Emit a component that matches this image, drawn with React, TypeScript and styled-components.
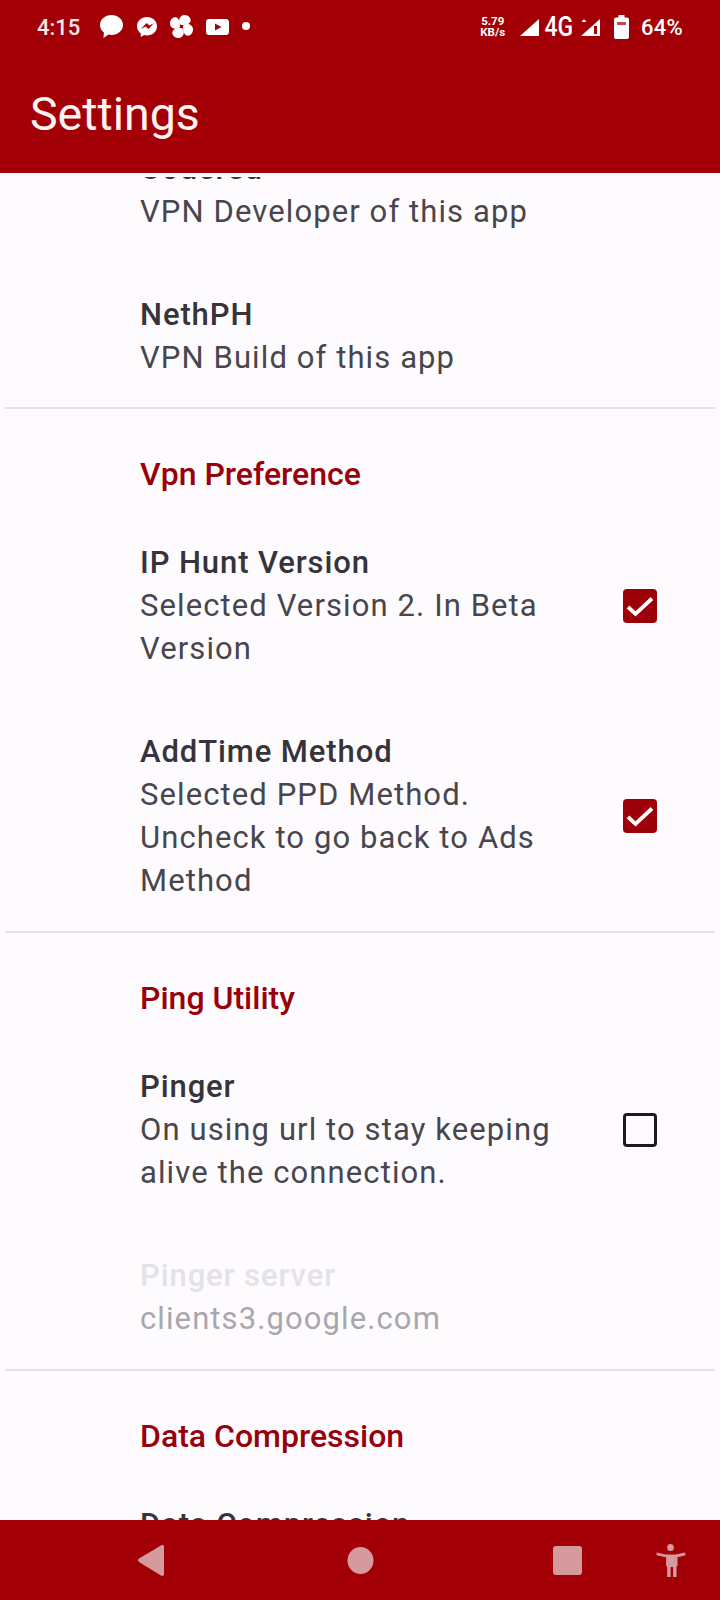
import React from "react";
import styled, { createGlobalStyle } from "styled-components";

const Global = createGlobalStyle`
  html, body { margin: 0; padding: 0; background: #fefbff; }
  * { box-sizing: border-box; }
`;

const Screen = styled.div`
  width: 720px;
  height: 1600px;
  display: flex;
  flex-direction: column;
  overflow: hidden;
  background: #fefbff;
  font-family: Roboto, "Noto Sans", sans-serif;
`;

// ─── Status bar + app bar ─────────────────────────────────────────────────────

const Header = styled.header`
  height: 173px;
  margin-bottom: 4px;
  flex-shrink: 0;
  background: #a20006;
  color: #fff;
  position: relative;
  z-index: 1;
`;

const StatusBar = styled.div`
  height: 54px;
  padding: 0 37px;
  display: flex;
  align-items: center;
  justify-content: space-between;
`;

const StatusGroup = styled.div`
  display: flex;
  align-items: center;
`;

const Clock = styled.span`
  font-size: 22px;
  font-weight: 500;
  margin-right: 20px;
  color: #fbeaea;
`;

const Speed = styled.span`
  font-size: 11.500px;
  line-height: 11px;
  font-weight: 700;
  text-align: center;
  margin-right: 15px;
`;

const NetLabel = styled.span`
  font-size: 27px;
  font-weight: 500;
  margin: 0 5px 0 3px;
  transform: scaleX(0.85);
`;

const Battery = styled.span`
  font-size: 22px;
  font-weight: 500;
  letter-spacing: 0.3px;
  margin-left: 12px;
`;

const Title = styled.h1`
  margin: 0;
  padding: 30px 0 0 30px;
  font-size: 46.500px;
  line-height: 60px;
  font-weight: 400;
  color: #fff3f1;
`;

// ─── Preference list ──────────────────────────────────────────────────────────

const List = styled.main`
  flex: 1;
  min-height: 0;
  overflow: hidden;
`;

const ListInner = styled.div`
  margin-top: -73px;
`;

const Section = styled.section<{ $bottom: number }>`
  margin: 0 5px;
  padding: 43px 0 ${({ $bottom }) => $bottom}px;
  border-bottom: 2px solid #e4e1e6;
  &:last-child { border-bottom: 0; }
`;

const SectionTitle = styled.h2`
  margin: 0 0 45px;
  padding-left: 135px;
  font-size: 32px;
  line-height: 44px;
  font-weight: 500;
  color: #98000a;
`;

const Row = styled.div`
  display: flex;
  align-items: center;
  padding-left: 135px;
  padding-right: 58px;
  & + & { margin-top: 60px; }
`;

const RowText = styled.div`
  flex: 1;
  min-width: 0;
  padding-right: 50px;
`;

const RowTitle = styled.div<{ $disabled?: boolean }>`
  font-size: 31px;
  line-height: 43px;
  font-weight: 500;
  letter-spacing: 0.9px;
  color: ${({ $disabled }) => ($disabled ? "#e4e2e6" : "#36343a")};
`;

const RowSummary = styled.div<{ $disabled?: boolean }>`
  font-size: 31px;
  line-height: 43px;
  letter-spacing: 1.100px;
  color: ${({ $disabled }) => ($disabled ? "#a9a6ad" : "#48464c")};
`;

const CheckBox = styled.span<{ $checked: boolean }>`
  width: 34px;
  height: 34px;
  flex-shrink: 0;
  border-radius: 4px;
  display: flex;
  align-items: center;
  justify-content: center;
  background: ${({ $checked }) => ($checked ? "#9c0009" : "transparent")};
  border: ${({ $checked }) => ($checked ? "none" : "3.500px solid #1e1b20")};
`;

// ─── Navigation bar ───────────────────────────────────────────────────────────

const NavBar = styled.nav`
  height: 80px;
  flex-shrink: 0;
  background: #a20006;
  position: relative;
  z-index: 1;
`;

const NavIcons = styled.svg`
  display: block;
`;

const PETAL = "M-.5-1.500C-4-4-2.500-11.500 3-11.500C8-11.500 11-6.500 8-3.500C6-2 3-1.500-.5-1.500Z";

function Pref({
  title,
  summary,
  checked,
  disabled,
}: {
  title: string;
  summary: React.ReactNode;
  checked?: boolean;
  disabled?: boolean;
}) {
  return (
    <Row>
      <RowText>
        <RowTitle $disabled={disabled}>{title}</RowTitle>
        <RowSummary $disabled={disabled}>{summary}</RowSummary>
      </RowText>
      {checked !== undefined && (
        <CheckBox $checked={checked}>
          {checked && (
            <svg width="34" height="34" viewBox="0 0 34 34">
              <path d="M5 18l7.500 7L29 9.500" fill="none" stroke="#fff" strokeWidth="3.800" />
            </svg>
          )}
        </CheckBox>
      )}
    </Row>
  );
}

export default function App() {
  return (
    <Screen>
      <Global />
      <Header>
        <StatusBar>
          <StatusGroup>
            <Clock>4:15</Clock>
            <svg width="150" height="28" viewBox="0 0 150 28" fill="#fff">
              {/* chat bubble */}
              <path d="M11.500 2c6.400 0 11.500 4.400 11.500 10s-5.100 10-11.500 10c-1 0-2-.1-3-.4L3.500 25l.4-5.500C1.500 17.900 0 15.200 0 12 0 6.400 5.100 2 11.500 2z" />
              {/* messenger */}
              <path
                fillRule="evenodd"
                d="M47 4c5.600 0 10 4 10 9.200s-4.400 9.200-10 9.200c-1 0-2-.1-2.900-.4L40.800 24v-3.600c-2.300-1.700-3.800-4.200-3.800-7.200C37 8 41.400 4 47 4zm-6 12l4.500-2.500 3 2.500 5.500-6-4.500 2.500-3-2.500z"
              />
              {/* pinwheel */}
              <g transform="translate(81.500 13.500)">
                {[0, 90, 180, 270].map((deg) => (
                  <path key={deg} d={PETAL} transform={`rotate(${deg})`} />
                ))}
              </g>
              {/* youtube */}
              <path
                fillRule="evenodd"
                d="M109 6h17c1.700 0 3 1.300 3 3v10c0 1.700-1.300 3-3 3h-17c-1.700 0-3-1.300-3-3V9c0-1.700 1.300-3 3-3zm6 4.500v7l6.500-3.500z"
              />
              <circle cx="146" cy="13" r="4" />
            </svg>
          </StatusGroup>
          <StatusGroup>
            <Speed>
              5.79
              <br />
              KB/s
            </Speed>
            <svg width="19" height="19" viewBox="0 0 19 19" fill="#fff">
              <path d="M0 18L19 1v17z" />
            </svg>
            <NetLabel>4G</NetLabel>
            <svg width="20" height="20" viewBox="0 0 20 20" fill="#fff">
              <path d="M0.500 5h5l-2.500-3zM0 19L19 2v17z" />
              <path d="M13 9h3v8h-3z" fill="#a20006" />
            </svg>
            <svg width="15" height="24" viewBox="0 0 15 24" fill="#fff" style={{ marginLeft: 13 }}>
              <path d="M4.500 0h6v2.500H13a2 2 0 0 1 2 2V22a2 2 0 0 1-2 2H2a2 2 0 0 1-2-2V4.500a2 2 0 0 1 2-2h2.500z" />
              <path d="M3 7h9v3H3z" fill="#c9464a" />
            </svg>
            <Battery>64%</Battery>
          </StatusGroup>
        </StatusBar>
        <Title>Settings</Title>
      </Header>
      <List>
        <ListInner>
          <Section $bottom={28}>
            <Pref title="Codered" summary="VPN Developer of this app" />
            <Pref title="NethPH" summary="VPN Build of this app" />
          </Section>
          <Section $bottom={29}>
            <SectionTitle>Vpn Preference</SectionTitle>
            <Pref
              title="IP Hunt Version"
              summary={
                <>
                  Selected Version 2. In Beta
                  <br />
                  Version
                </>
              }
              checked
            />
            <Pref
              title="AddTime Method"
              summary={
                <>
                  Selected PPD Method.
                  <br />
                  Uncheck to go back to Ads
                  <br />
                  Method
                </>
              }
              checked
            />
          </Section>
          <Section $bottom={29}>
            <SectionTitle>Ping Utility</SectionTitle>
            <Pref
              title="Pinger"
              summary={
                <>
                  On using url to stay keeping
                  <br />
                  alive the connection.
                </>
              }
              checked={false}
            />
            <Pref title="Pinger server" summary="clients3.google.com" disabled />
          </Section>
          <Section $bottom={29}>
            <SectionTitle>Data Compression</SectionTitle>
            <Pref title="Data Compression" summary="Enabled" />
          </Section>
        </ListInner>
      </List>
      <NavBar>
        <NavIcons width="720" height="80" viewBox="0 0 720 80" fill="#d59a9d">
          <path d="M164 27v27c0 2-1.500 2.500-3 1.500L139 42c-1.200-1-1.200-2.500 0-3.500L161 25.500c1.500-1 3-.5 3 1.500z" />
          <ellipse cx="360.500" cy="40.500" rx="13" ry="13.500" />
          <rect x="553" y="26" width="29" height="29" rx="3" />
          <path d="M670.500 24a3.300 3.300 0 0 1 3.300 3.500 3.300 3.300 0 0 1-3.300 3.500 3.300 3.300 0 0 1-3.300-3.500 3.300 3.300 0 0 1 3.300-3.500zM656.500 32.500l9 2h10l9.500-2 .5 2.800-8 2V46l-1 .5V57h-3.400V47h-2.500v10h-3.400V46.500l-1.100-.5v-8.700l-9.500-2z" />
        </NavIcons>
      </NavBar>
    </Screen>
  );
}
